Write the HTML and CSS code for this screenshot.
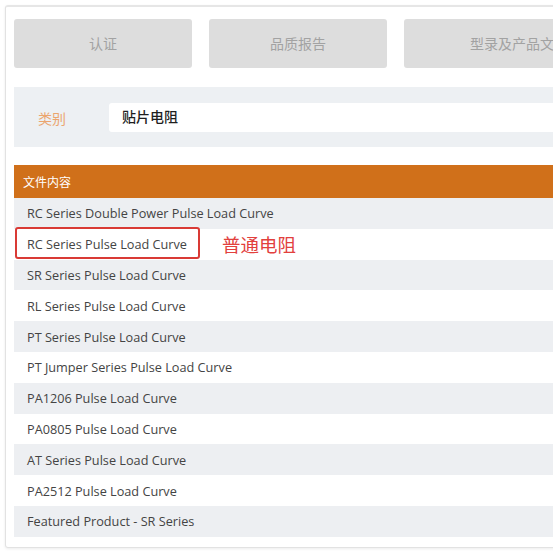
FILE: index.html
```html
<!DOCTYPE html>
<html lang="zh">
<head>
<meta charset="utf-8">
<link rel="stylesheet" href="styles.css">
</head>
<body>
<div class="card">
  <div class="tabs">
    <div class="tab">认证</div>
    <div class="tab">品质报告</div>
    <div class="tab wide">型录及产品文件</div>
  </div>
  <div class="filter">
    <span class="label">类别</span>
    <div class="input">贴片电阻</div>
  </div>
  <div class="table">
    <div class="head">文件内容</div>
    <div class="row odd">RC Series Double Power Pulse Load Curve</div>
    <div class="row marked">RC Series Pulse Load Curve<span class="box"></span><span class="note">普通电阻</span></div>
    <div class="row odd">SR Series Pulse Load Curve</div>
    <div class="row">RL Series Pulse Load Curve</div>
    <div class="row odd">PT Series Pulse Load Curve</div>
    <div class="row">PT Jumper Series Pulse Load Curve</div>
    <div class="row odd">PA1206 Pulse Load Curve</div>
    <div class="row">PA0805 Pulse Load Curve</div>
    <div class="row odd">AT Series Pulse Load Curve</div>
    <div class="row">PA2512 Pulse Load Curve</div>
    <div class="row odd">Featured Product - SR Series</div>
  </div>
</div>
</body>
</html>
```
FILE: styles.css
```css
html, body {
  margin: 0;
  padding: 0;
  background: #ffffff;
  overflow: hidden;
}
body {
  width: 553px;
  height: 553px;
  font-family: "Open Sans", "Noto Sans CJK SC", sans-serif;
}
.card {
  margin: 5px 0 0 5px;
  width: 700px;
  border: 1px solid #e2e2e2;
  border-top: 2px solid #e6e6e6;
  border-radius: 3px;
  box-shadow: 0 1px 3px rgba(0,0,0,0.08);
  padding: 12px 0 10px 8px;
  box-sizing: border-box;
}
.tabs {
  display: flex;
  gap: 17px;
}
.tab {
  width: 178px;
  height: 49px;
  flex: none;
  background: #dddddd;
  border-radius: 3px;
  color: #a2a2a2;
  font-size: 14px;
  display: flex;
  align-items: center;
  justify-content: center;
  padding-bottom: 2px;
  box-sizing: border-box;
}
.tab.wide {
  width: 230px;
}
.filter {
  margin-top: 19px;
  height: 60px;
  background: #edf0f3;
  display: flex;
  align-items: center;
  padding-left: 24px;
}
.label {
  width: 71px;
  color: #eba56e;
  font-size: 14px;
  padding-top: 2px;
}
.input {
  flex: 1;
  height: 29px;
  background: #ffffff;
  border-radius: 3px;
  padding-left: 13px;
  display: flex;
  align-items: center;
  font-size: 14px;
  font-weight: 500;
  color: #1f1f1f;
  padding-bottom: 2px;
  box-sizing: border-box;
}
.table {
  margin-top: 18px;
}
.head {
  height: 33px;
  background: #d0701a;
  color: #ffffff;
  font-size: 12px;
  padding-left: 9px;
  display: flex;
  align-items: center;
}
.row {
  height: 30.8px;
  padding-left: 13px;
  display: flex;
  align-items: center;
  font-size: 12.7px;
  color: #444444;
  background: #ffffff;
  position: relative;
}
.row.odd {
  background: #edeff2;
}
.box {
  position: absolute;
  left: 1px;
  top: -2px;
  width: 185px;
  height: 32px;
  border: 2px solid #d93a35;
  border-radius: 3px;
  box-sizing: border-box;
}
.note {
  position: absolute;
  left: 208px;
  top: 3px;
  font-size: 18.5px;
  color: #e2403d;
  font-family: "Noto Sans CJK SC", sans-serif;
  line-height: 24px;
}
```
